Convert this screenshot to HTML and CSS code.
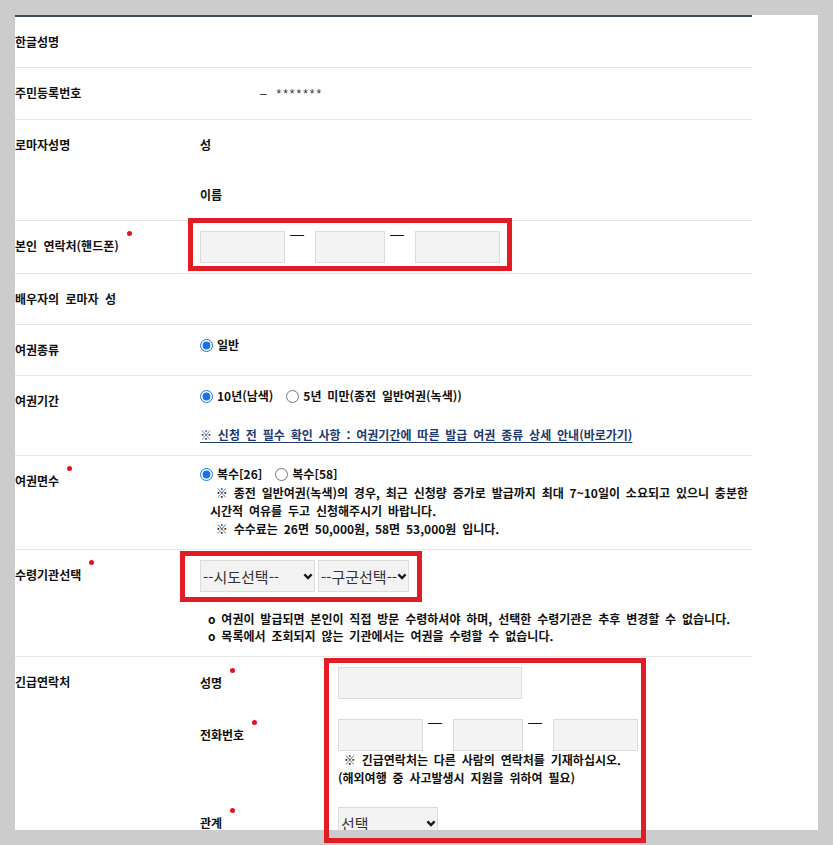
FILE: index.html
```html
<!DOCTYPE html>
<html lang="ko">
<head>
<meta charset="utf-8">
<title>여권 발급 신청</title>
<link rel="stylesheet" href="styles.css">
</head>
<body>
<div class="page">
  <div class="panel">
    <div class="form">
      <div class="row">
        <div class="th">한글성명</div>
        <div class="td"></div>
      </div>
      <div class="row">
        <div class="th">주민등록번호</div>
        <div class="td plain"><span class="rrn">– *******</span></div>
      </div>
      <div class="row">
        <div class="th">로마자성명</div>
        <div class="td">
          <div class="sub">성</div>
          <div class="sub">이름</div>
        </div>
      </div>
      <div class="row">
        <div class="th">본인 연락처(핸드폰)<span class="dot"></span></div>
        <div class="td phone">
          <input class="inp w85" type="text"><span class="dash">—</span><input class="inp w70" type="text"><span class="dash">—</span><input class="inp w85" type="text">
        </div>
      </div>
      <div class="row">
        <div class="th">배우자의 로마자 성</div>
        <div class="td"></div>
      </div>
      <div class="row">
        <div class="th">여권종류</div>
        <div class="td radios">
          <div class="opts">
            <label class="opt"><input type="radio" name="kind" checked>일반</label>
          </div>
        </div>
      </div>
      <div class="row">
        <div class="th">여권기간</div>
        <div class="td radios term">
          <div class="opts">
            <label class="opt"><input type="radio" name="term" checked>10년(남색)</label>
            <label class="opt"><input type="radio" name="term">5년 미만(종전 일반여권(녹색))</label>
          </div>
          <a class="guide" href="#">※ 신청 전 필수 확인 사항 : 여권기간에 따른 발급 여권 종류 상세 안내(바로가기)</a>
        </div>
      </div>
      <div class="row">
        <div class="th">여권면수<span class="dot"></span></div>
        <div class="td pages">
          <div class="opts">
            <label class="opt"><input type="radio" name="pages" checked>복수[26]</label>
            <label class="opt"><input type="radio" name="pages">복수[58]</label>
          </div>
          <p class="note">&nbsp;※ 종전 일반여권(녹색)의 경우, 최근 신청량 증가로 발급까지 최대 7~10일이 소요되고 있으니 충분한<br>시간적 여유를 두고 신청해주시기 바랍니다.<br>&nbsp;※ 수수료는 26면 50,000원, 58면 53,000원 입니다.</p>
        </div>
      </div>
      <div class="row">
        <div class="th">수령기관선택<span class="dot"></span></div>
        <div class="td office">
          <div class="selects">
            <span class="sel w115">
              <select><option>--시도선택--</option></select>
              <svg class="chev" width="10" height="7" viewBox="0 0 10 7"><path d="M1.4 1.4 L5 5 L8.6 1.4" fill="none" stroke="#1a1a1a" stroke-width="2.4"/></svg>
            </span>
            <span class="sel w91">
              <select><option>--구군선택--</option></select>
              <svg class="chev" width="10" height="7" viewBox="0 0 10 7"><path d="M1.4 1.4 L5 5 L8.6 1.4" fill="none" stroke="#1a1a1a" stroke-width="2.4"/></svg>
            </span>
          </div>
          <p class="note2">o 여권이 발급되면 본인이 직접 방문 수령하셔야 하며, 선택한 수령기관은 추후 변경할 수 없습니다.<br>o 목록에서 조회되지 않는 기관에서는 여권을 수령할 수 없습니다.</p>
        </div>
      </div>
      <div class="row">
        <div class="th">긴급연락처</div>
        <div class="td emg">
          <div class="lbl">성명<span class="dot"></span></div>
          <div class="fld"><input class="inp w184" type="text"></div>
          <div class="lbl">전화번호<span class="dot"></span></div>
          <div class="fld">
            <div class="phone-line"><input class="inp w85" type="text"><span class="dash">—</span><input class="inp w70" type="text"><span class="dash">—</span><input class="inp w85" type="text"></div>
            <p class="note3">&nbsp;※ 긴급연락처는 다른 사람의 연락처를 기재하십시오.<br>(해외여행 중 사고발생시 지원을 위하여 필요)</p>
          </div>
          <div class="lbl">관계<span class="dot"></span></div>
          <div class="fld">
            <span class="sel w100">
              <select><option>선택</option></select>
              <svg class="chev" width="10" height="7" viewBox="0 0 10 7"><path d="M1.4 1.4 L5 5 L8.6 1.4" fill="none" stroke="#1a1a1a" stroke-width="2.4"/></svg>
            </span>
          </div>
        </div>
      </div>
    </div>
  </div>
  <div class="mark mark-phone"></div>
  <div class="mark mark-office"></div>
  <div class="mark mark-emergency"></div>
</div>
</body>
</html>
```

FILE: styles.css
```css
html, body {
  margin: 0;
  padding: 0;
}
body {
  background: #cccccc;
  font-family: "Noto Sans CJK KR", "Noto Sans", sans-serif;
  color: #111;
}
.page {
  position: relative;
  width: 833px;
  height: 845px;
  padding: 15px 0 0 15px;
  box-sizing: border-box;
  overflow: hidden;
}
.panel {
  width: 803px;
  height: 815px;
  background: #ffffff;
  overflow: hidden;
}
.form {
  width: 737px;
  border-top: 2px solid #3e4a5c;
}
.row {
  display: flex;
  border-bottom: 1px solid #e8e8e8;
}
.th {
  width: 185px;
  flex: none;
  padding: 16px 0;
  line-height: 18px;
  font-size: 12px;
  font-weight: bold;
  color: #111;
  word-spacing: 3px;
  white-space: nowrap;
}
.td {
  flex: 1;
  font-size: 12px;
  font-weight: bold;
  color: #111;
  line-height: 18px;
  word-spacing: 2.5px;
}
.plain {
  padding: 16px 0;
}
.rrn {
  margin-left: 60px;
  color: #333;
  font-family: "Liberation Sans", sans-serif;
  font-size: 12px;
  font-weight: normal;
  letter-spacing: 2px;
}
.sub {
  padding: 16px 0;
}
.dot {
  display: inline-block;
  width: 5px;
  height: 5px;
  border-radius: 50%;
  background: #e3141e;
  margin-left: 8px;
  vertical-align: top;
  position: relative;
  top: -6px;
}
.phone {
  display: flex;
  align-items: flex-start;
  padding: 10px 0;
}
.inp {
  height: 32px;
  box-sizing: border-box;
  border: 1px solid #dcdcdc;
  background: #f3f3f3;
  margin: 0;
  padding: 0 4px;
  outline: none;
}
.w85 { width: 85px; }
.w70 { width: 70px; }
.w184 { width: 184px; }
.dash {
  display: block;
  margin: -4px 11px 0 5px;
  font-family: "Liberation Sans", sans-serif;
  font-size: 14px;
  line-height: 14px;
  height: 14px;
  font-weight: normal;
  color: #111;
  word-spacing: 0;
}
.radios {
  padding: 10px 0;
}
.term {
  padding-bottom: 11px;
}
.pages {
  padding: 8px 0 11px;
}
.opts {
  display: flex;
  align-items: center;
  height: 20px;
}
.opt {
  display: inline-flex;
  align-items: center;
  margin-right: 13px;
  color: #111;
}
.opt input {
  width: 13px;
  height: 13px;
  margin: 0 4px 0 0;
  accent-color: #1a73e8;
}
.guide {
  display: block;
  margin-top: 20px;
  color: #1f3a6e;
  text-decoration: underline;
  text-underline-offset: 2px;
  white-space: nowrap;
}
.note {
  margin: 0;
  padding-left: 10px;
  line-height: 18px;
  color: #111;
  white-space: nowrap;
}
.office {
  padding: 10px 0 12px;
}
.selects {
  display: flex;
  gap: 3px;
}
.sel {
  position: relative;
  display: inline-flex;
}
.sel select {
  appearance: none;
  -webkit-appearance: none;
  height: 32px;
  box-sizing: border-box;
  border: 1px solid #dcdcdc;
  border-radius: 0;
  background: #f3f3f3;
  font-family: "Noto Sans CJK KR", "Noto Sans", sans-serif;
  font-size: 15px;
  font-weight: normal;
  color: #333;
  padding: 0 0 0 2px;
  margin: 0;
  outline: none;
}
.w115 select { width: 115px; }
.w91 select { width: 91px; }
.w100 select { width: 100px; }
.chev {
  position: absolute;
  right: 2px;
  top: 13px;
  pointer-events: none;
}
.note2 {
  margin: 18px 0 0;
  padding-left: 8px;
  line-height: 17px;
  white-space: nowrap;
}
.emg {
  padding: 10px 0;
  display: grid;
  grid-template-columns: 138px 1fr;
  row-gap: 20px;
  align-items: start;
}
.lbl {
  line-height: 32px;
  height: 32px;
}
.lbl .dot {
  top: 1px;
}
.fld {
  display: flex;
  flex-direction: column;
  align-items: flex-start;
}
.phone-line {
  display: flex;
  align-items: flex-start;
}
.note3 {
  margin: 0;
  line-height: 18px;
  white-space: nowrap;
}
.mark {
  position: absolute;
  border: 5px solid #e31b25;
  box-sizing: border-box;
}
.mark-phone {
  left: 188px;
  top: 218px;
  width: 324px;
  height: 53px;
}
.mark-office {
  left: 180px;
  top: 551px;
  width: 242px;
  height: 51px;
}
.mark-emergency {
  left: 324px;
  top: 658px;
  width: 322px;
  height: 185px;
}
```
